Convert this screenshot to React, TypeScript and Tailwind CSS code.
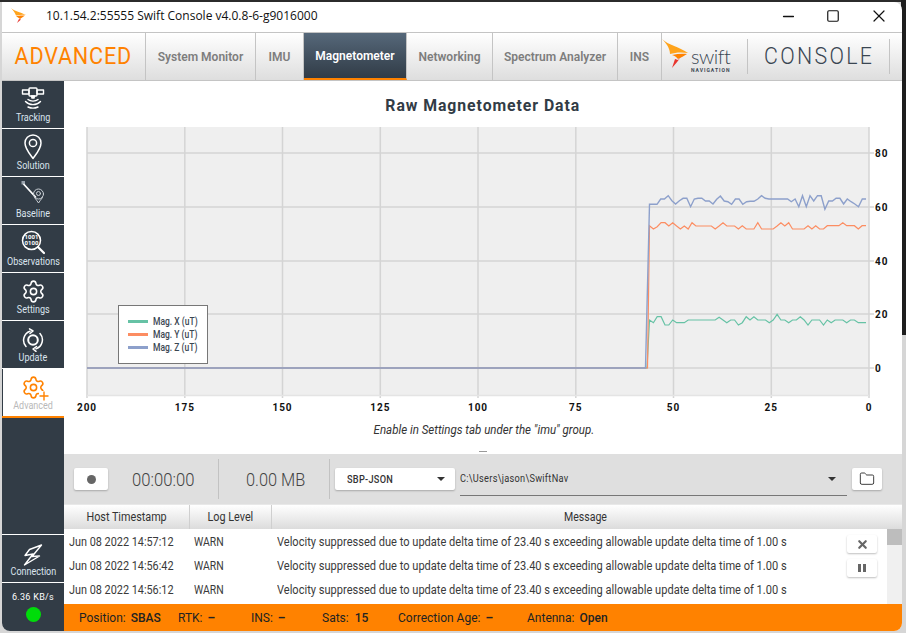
import { Folder, Minus, Settings, Square, X } from "lucide-react";
import type { ReactNode } from "react";

const blue = [73,73,73,57,57,47,62,72,62,55,55,80,57,55,55,63,63,72,58,48,63,65,73,57,57,73,65,64,64,57,47,55,57,57,57,57,57,57,65,57,80,47,80,47,63,47,47,88,63,63,55,55,72,57,65,72,80,57,57];
const orange = [137,147,140,128,128,138,128,138,147,138,147,128,138,138,138,138,138,147,138,128,138,138,138,147,137,147,147,147,128,147,147,147,147,138,128,138,128,147,147,147,147,137,147,137,147,147,137,137,137,137,128,137,137,137,147,137,137];
const green = [420,428,410,410,435,435,420,428,428,428,420,420,420,420,420,420,420,420,412,420,428,420,420,435,428,410,420,410,420,420,420,428,420,403,420,420,428,420,420,410,420,435,420,420,420,435,420,428,420,420,420,428,420,420,428,428,428];

function toPoints(values: number[], start: string) {
  const step = 216.5 / (values.length - 1);
  const pts = values.map((v, i) => `${(649.5 + i * step).toFixed(1)},${(180 + v / 3).toFixed(1)}`);
  return `87,368 ${start} ${pts.join(" ")}`;
}

const tabs = [
  { label: "System Monitor", w: "w-[110px]" },
  { label: "IMU", w: "w-[48px]" },
  { label: "Magnetometer", w: "w-[103px]", active: true },
  { label: "Networking", w: "w-[86px]" },
  { label: "Spectrum Analyzer", w: "w-[125px]" },
  { label: "INS", w: "w-[44px]" },
];

const logRows = ["Jun 08 2022 14:57:12", "Jun 08 2022 14:56:42", "Jun 08 2022 14:56:12"];

function NavItem({ label, icon }: { label: string; icon: ReactNode }) {
  return (
    <div className="flex h-[47px] flex-col items-center text-[10px] leading-none text-[#dbe4ee]">
      <div className="flex h-[31px] items-end justify-center">{icon}</div>
      <div className="mt-[1px] scale-x-90 whitespace-nowrap">{label}</div>
    </div>
  );
}

function Sep() {
  return <div className="h-px shrink-0 bg-white" />;
}

const iconProps = {
  fill: "none",
  stroke: "currentColor",
  strokeLinecap: "round" as const,
  strokeLinejoin: "round" as const,
};

function TrackingIcon() {
  return (
    <svg width="24" height="25" viewBox="0 0 24 25" {...iconProps} strokeWidth="1.4" className="text-white">
      <rect x="8" y="1" width="8" height="8" rx="1" />
      <rect x="1.5" y="3" width="6.5" height="4" />
      <rect x="16" y="3" width="6.5" height="4" />
      <path d="M10.5 9h3l-.5 2h-2z" fill="currentColor" />
      <path d="M7 12.5c2.5 2.2 7.5 2.2 10 0" />
      <path d="M4.5 14.5c4 4.2 11 4.2 15 0" />
      <path d="M7 20c3 1.4 7 1.4 10 0" />
    </svg>
  );
}

function PinIcon() {
  return (
    <svg width="20" height="27" viewBox="0 0 20 27" {...iconProps} strokeWidth="1.5" className="text-white">
      <path d="M10 25.5C6 20 2 15.5 2 10a8 8 0 0 1 16 0c0 5.5-4 10-8 15.5z" />
      <circle cx="10" cy="10" r="3.6" />
    </svg>
  );
}

function BaselineIcon() {
  return (
    <svg width="24" height="28" viewBox="0 0 24 28" {...iconProps} className="text-white">
      <rect x="0.5" y="1" width="3.5" height="3.5" fill="#9aa3ad" stroke="none" />
      <path d="M3 4.5 14.5 17" strokeWidth="1.8" />
      <circle cx="17.5" cy="14" r="5" strokeWidth="1" stroke="#c8ced4" />
      <circle cx="17.5" cy="13.5" r="2" strokeWidth="1" stroke="#c8ced4" />
      <path d="M13.5 17.5c1.5 2 2.8 3.6 4 5.5 1.2-1.9 2.5-3.5 4-5.5" strokeWidth="1" stroke="#c8ced4" />
    </svg>
  );
}

function ObservationsIcon() {
  return (
    <svg width="24" height="26" viewBox="0 0 24 26" {...iconProps} className="text-white">
      <circle cx="10.5" cy="10.5" r="9" strokeWidth="1.5" />
      <path d="M17 17l6 6" strokeWidth="2.2" />
      <text x="10.5" y="9" fontSize="6" fontWeight="700" textAnchor="middle" fill="currentColor" stroke="none" fontFamily="Roboto, sans-serif">1001</text>
      <text x="10.5" y="15" fontSize="6" fontWeight="700" textAnchor="middle" fill="currentColor" stroke="none" fontFamily="Roboto, sans-serif">0100</text>
    </svg>
  );
}

function UpdateIcon() {
  return (
    <svg width="22" height="24" viewBox="0 0 22 24" {...iconProps} strokeWidth="1.5" className="text-white">
      <path d="M18 5.5A9.5 9.5 0 0 1 14 20.8" />
      <path d="M4 18.5A9.5 9.5 0 0 1 8 3.2" />
      <path d="M7.5 0.8 11 3 8 5.5" />
      <path d="M14.5 18.5 11 21l3 2.4" />
      <circle cx="11" cy="12" r="4.8" strokeWidth="2" />
    </svg>
  );
}

function AdvancedIcon() {
  return (
    <div className="relative">
      <Settings size={25} strokeWidth={1.5} className="text-[#ff8200]" />
      <svg width="10" height="10" viewBox="0 0 10 10" className="absolute -right-[3px] bottom-[-1px] bg-white text-[#ff8200]" stroke="currentColor" strokeWidth="1.4">
        <path d="M5 0.5v9M0.5 5h9" />
      </svg>
    </div>
  );
}

function ConnectionIcon() {
  return (
    <svg width="20" height="22" viewBox="0 0 20 22" {...iconProps} strokeWidth="1.4" className="text-white">
      <path d="M18.5 1 6.5 5.5 2 11.5l8-1.5-8.5 11 15-9-7.5.5 5-6z" />
    </svg>
  );
}

function SwiftLogo() {
  return (
    <div className="flex h-full w-[85px] shrink-0 items-start">
      <svg width="28" height="30" viewBox="0 0 28 30" className="mt-[6px] shrink-0">
        <path d="M0 0c6 6 18 8 26 14-7-1-13-.5-18 1C8 9 4 4 0 0z" fill="#ffa41c" />
        <path d="M10 16c5-1 10-1.5 15-1-3 2-6 3.5-9 5-1-1.5-3-3-6-4z" fill="#ff8200" />
        <path d="M10 29l3-9 3 1 3-3c-3 4-6 7.5-9 11z" fill="#e8352e" />
      </svg>
      <div className="ml-[1px] mt-[12px] flex flex-col items-start">
        <div className="text-[20px] font-light leading-[22px] tracking-[-0.5px] text-[#3a4652]" style={{ fontFamily: "Lato, sans-serif" }}>swift</div>
        <div className="text-[5px] font-bold leading-[6px] tracking-[1px] text-[#3a4652]">NAVIGATION</div>
      </div>
    </div>
  );
}

function Chart() {
  const xLabels = ["200", "175", "150", "125", "100", "75", "50", "25", "0"];
  const xs = [87, 184.8, 282.5, 380.3, 478, 575.8, 673.5, 771.3, 869];
  const yLabels = [
    { y: 153, t: "80" },
    { y: 207, t: "60" },
    { y: 261, t: "40" },
    { y: 314, t: "20" },
    { y: 368, t: "0" },
  ];
  return (
    <svg width="838" height="300" viewBox="64 120 838 300" className="block">
      <rect x="87" y="127" width="782" height="269" fill="#efefef" />
      {xs.map((x) => (
        <line key={x} x1={x} x2={x} y1="127" y2="398" stroke="#d4d4d4" strokeWidth="1.5" />
      ))}
      {yLabels.map((l) => (
        <g key={l.t}>
          <line x1="87" x2="874" y1={l.y} y2={l.y} stroke="#d4d4d4" strokeWidth="1.5" />
          <text x="875" y={l.y + 3.5} fontSize="10" fontWeight="700" letterSpacing="1" fill="#111">{l.t}</text>
        </g>
      ))}
      <line x1="87" x2="869" y1="395.5" y2="395.5" stroke="#e4e4e4" strokeWidth="1.5" />
      {xs.map((x, i) => (
        <text key={x} x={x} y="410.5" textAnchor="middle" fontSize="10" fontWeight="700" letterSpacing="1" fill="#111">{xLabels[i]}</text>
      ))}
      <polyline points={toPoints(green, "647,368")} fill="none" stroke="#66c2a5" strokeWidth="1.2" />
      <polyline points={toPoints(orange, "647.5,368")} fill="none" stroke="#fc8d62" strokeWidth="1.2" />
      <polyline points={toPoints(blue, "645.5,368")} fill="none" stroke="#8da0cb" strokeWidth="1.4" />
    </svg>
  );
}

function Legend() {
  const items = [
    { c: "bg-[#66c2a5]", t: "Mag. X (uT)" },
    { c: "bg-[#fc8d62]", t: "Mag. Y (uT)" },
    { c: "bg-[#8da0cb]", t: "Mag. Z (uT)" },
  ];
  return (
    <div className="absolute left-[54px] top-[224px] flex h-[59px] w-[90px] flex-col justify-center gap-[1px] border border-[#777] bg-white pl-[9px]">
      {items.map((it) => (
        <div key={it.t} className="flex h-[12px] items-center gap-[5px] text-[10px] font-medium text-[#3a4652]">
          <div className={`h-[3px] w-[20px] ${it.c}`} />
          <span className="origin-left scale-x-[0.85] whitespace-nowrap">{it.t}</span>
        </div>
      ))}
    </div>
  );
}

function WhiteButton({ className, children }: { className: string; children: ReactNode }) {
  return (
    <div className={`flex items-center justify-center rounded-[2px] bg-white shadow-[0_1px_2px_rgba(0,0,0,0.25)] ${className}`}>
      {children}
    </div>
  );
}

function Caret() {
  return <div className="h-0 w-0 border-x-[4px] border-t-[4px] border-x-transparent border-t-[#333]" />;
}

export default function App() {
  return (
    <div className="relative h-[633px] w-[906px] overflow-hidden bg-[#d6d6d6] pl-[2px] pt-[2px]" style={{ fontFamily: "Roboto, sans-serif" }}>
      <div className="absolute left-0 top-0 h-[2px] w-full bg-[#2b2b2b]" />
      <div className="absolute right-0 top-0 h-[335px] w-[5px] bg-[#1e1e1e]" />
      <div className="relative flex h-[629px] w-[900px] flex-col overflow-hidden rounded-b-lg rounded-tr-lg bg-white">
        {/* title bar */}
        <div className="flex h-[30px] shrink-0 items-center pb-[2px]">
          <svg width="16" height="16" viewBox="0 0 16 16" className="ml-[9px]">
            <path d="M0 0c3 3 9 4 15 7-4-.5-7 0-10 .5C4 5 2 2 0 0z" fill="#ffa41c" />
            <path d="M5 8c3-.5 6-.5 9-.5L9 11z" fill="#ff8200" />
            <path d="M6 15l2-4 2 .5z" fill="#e8352e" />
          </svg>
          <div className="ml-[19px] text-[12px] text-[#111]" style={{ fontFamily: "'Open Sans', sans-serif" }}>10.1.54.2:55555 Swift Console v4.0.8-6-g9016000</div>
          <div className="ml-auto flex items-center text-[#111]">
            <Minus size={17} strokeWidth={1.8} className="mr-[29.5px]" />
            <Square size={14} strokeWidth={2} className="mr-[29px]" />
            <X size={20} strokeWidth={1.45} className="mr-[13px]" />
          </div>
        </div>

        {/* tab bar */}
        <div className="flex h-[49px] shrink-0 items-stretch border-y border-[#c4c4c4] bg-gradient-to-b from-white to-[#dedede]">
          <div className="flex w-[144px] shrink-0 items-center justify-center border-r border-[#c4c4c4] pb-[1px] text-[24px] tracking-[0.9px] text-[#ff8200]">
            <span className="scale-x-90">ADVANCED</span>
          </div>
          {tabs.map((t) => (
            <div
              key={t.label}
              className={`flex shrink-0 items-center justify-center border-r border-[#c4c4c4] text-[12px] font-semibold ${t.w} ${
                t.active
                  ? "border-b-2 border-b-[#ff8200] bg-gradient-to-b from-[#56687a] to-[#313c47] text-white"
                  : "text-[#7d7d7d]"
              }`}
            >
              {t.label}
            </div>
          ))}
          <SwiftLogo />
          <div className="my-[6px] w-px shrink-0 bg-[#c4c4c4]" />
          <div className="ml-[16px] flex w-[125px] shrink-0 items-center pb-[1px] text-[24px] font-light tracking-[2.6px] text-[#3a4652]">
            <span className="origin-left scale-x-[0.89]">CONSOLE</span>
          </div>
          <div className="my-[6px] w-px shrink-0 bg-[#c4c4c4]" />
        </div>

        <div className="flex min-h-0 flex-1">
          {/* sidebar */}
          <div className="flex w-[62px] shrink-0 flex-col bg-[#323c46]">
            <NavItem label="Tracking" icon={<TrackingIcon />} />
            <Sep />
            <NavItem label="Solution" icon={<PinIcon />} />
            <Sep />
            <NavItem label="Baseline" icon={<BaselineIcon />} />
            <Sep />
            <NavItem label="Observations" icon={<ObservationsIcon />} />
            <Sep />
            <NavItem label="Settings" icon={<Settings size={25} strokeWidth={1.5} className="text-white" />} />
            <Sep />
            <NavItem label="Update" icon={<UpdateIcon />} />
            <Sep />
            <div className="ml-px flex h-[47px] flex-col items-center bg-white text-[10px] leading-none text-[#b9b9b9]">
              <div className="flex h-[31px] items-end justify-center"><AdvancedIcon /></div>
              <div className="mt-[1px] scale-x-90">Advanced</div>
            </div>
            <div className="h-[2px] shrink-0 bg-[#ff8200]" />
            <div className="flex-1" />
            <Sep />
            <NavItem label="Connection" icon={<ConnectionIcon />} />
            <Sep />
            <div className="flex h-[48px] flex-col items-center pt-[9px] text-[9px] leading-[11px] tracking-[0.3px] text-white">
              <div>6.36 KB/s</div>
              <div className="mt-[4px] h-[15px] w-[15px] rounded-full bg-[#00dc0a]" />
            </div>
          </div>

          {/* main */}
          <div className="flex min-w-0 flex-1 flex-col">
            <div className="relative flex h-[373px] shrink-0 flex-col">
              <div className="flex h-[39px] shrink-0 items-center justify-center pt-[10px] text-[17px] font-bold tracking-[1px] text-[#323c46]">
                <span className="scale-x-[0.93]">Raw Magnetometer Data</span>
              </div>
              <Chart />
              <Legend />
              <div className="mt-[2px] pl-[1px] text-center text-[12px] italic leading-[16px] text-[#333]">
                <span className="inline-block scale-x-[0.96]">Enable in Settings tab under the "imu" group.</span>
              </div>
              <div className="absolute bottom-[2px] left-[415px] h-px w-[8px] bg-[#999]" />
            </div>

            {/* recording bar */}
            <div className="flex h-[50px] shrink-0 items-center bg-[#dfdfdf]">
              <WhiteButton className="ml-[10px] h-[22px] w-[34px]">
                <div className="h-[9px] w-[9px] rounded-full bg-[#666]" />
              </WhiteButton>
              <div className="w-[110px] shrink-0 pl-[24px] text-[18px] font-light text-[#444]">
                <span className="inline-block origin-left scale-x-[0.925]">00:00:00</span>
              </div>
              <div className="h-[40px] w-px shrink-0 bg-[#c2c2c2]" />
              <div className="flex w-[110px] shrink-0 justify-center pl-[3px] text-[18px] font-light text-[#444]">
                <span className="scale-x-[0.91]">0.00 MB</span>
              </div>
              <div className="h-[40px] w-px shrink-0 bg-[#c2c2c2]" />
              <WhiteButton className="ml-[5px] h-[22px] w-[120px] !justify-between pl-[12px] pr-[10px] text-[10px] font-medium tracking-[0.3px] text-[#333]">
                <span className="origin-left scale-x-[0.92]">SBP-JSON</span>
                <Caret />
              </WhiteButton>
              <div className="ml-[5px] flex h-[33px] w-[387px] shrink-0 items-center justify-between self-center border-b border-[#777] pr-[11px] text-[10px] tracking-[0.3px] text-[#333]">
                <span className="origin-left scale-x-[0.92]">C:\Users\jason\SwiftNav</span>
                <Caret />
              </div>
              <WhiteButton className="ml-[5px] h-[22px] w-[30px]">
                <Folder size={16} strokeWidth={1.3} className="text-[#222]" />
              </WhiteButton>
            </div>

            {/* log table */}
            <div className="flex h-[25px] shrink-0 items-center border-t border-[#e8e8e8] bg-gradient-to-b from-white to-[#dcdcdc] text-[12px] text-[#333]">
              <div className="flex h-full w-[126px] shrink-0 items-center justify-center border-r border-[#cfcfcf] pl-[1px]"><span className="scale-x-90">Host Timestamp</span></div>
              <div className="flex h-full w-[82px] shrink-0 items-center justify-center border-r border-[#cfcfcf]"><span className="scale-x-90">Log Level</span></div>
              <div className="flex h-full flex-1 items-center justify-center pr-[3px]"><span className="scale-x-[0.88]">Message</span></div>
            </div>
            <div className="flex min-h-0 flex-1">
              <div className="flex min-w-0 flex-1 flex-col pt-[1px] text-[12px] text-[#3a3a3a]">
                {logRows.map((ts) => (
                  <div key={ts} className="flex h-[24px] shrink-0 items-center whitespace-nowrap">
                    <div className="w-[125px] shrink-0 pl-[5px]"><span className="inline-block origin-left scale-x-[0.905]">{ts}</span></div>
                    <div className="w-[83px] shrink-0 pl-[5px]"><span className="inline-block origin-left scale-x-[0.87]">WARN</span></div>
                    <div className="pl-[5px]"><span className="inline-block origin-left scale-x-[0.922]">Velocity suppressed due to update delta time of 23.40 s exceeding allowable update delta time of 1.00 s</span></div>
                  </div>
                ))}
              </div>
              <div className="flex w-[40px] shrink-0 flex-col items-center gap-[6px] pr-[10px] pt-[6px]">
                <WhiteButton className="h-[18px] w-[30px]"><X size={13} strokeWidth={4} className="text-[#666]" /></WhiteButton>
                <WhiteButton className="h-[18px] w-[30px] gap-[2px]">
                  <div className="h-[8px] w-[3px] bg-[#666]" />
                  <div className="h-[8px] w-[3px] bg-[#666]" />
                </WhiteButton>
              </div>
              <div className="w-[15px] shrink-0 bg-[#f0f0f0]">
                <div className="h-[16px] bg-[#bdbdbd]" />
              </div>
            </div>

            {/* status bar */}
            <div className="flex h-[27px] shrink-0 items-center bg-[#ff8200] pl-[15px] text-[12px] text-[#222]">
              <div className="flex w-[99px] shrink-0 gap-[5px]"><span>Position:</span><span className="font-medium">SBAS</span></div>
              <div className="flex w-[73px] shrink-0 gap-[5px]"><span>RTK:</span><span className="font-bold">–</span></div>
              <div className="flex w-[71px] shrink-0 gap-[5px]"><span>INS:</span><span className="font-bold">–</span></div>
              <div className="flex w-[76px] shrink-0 gap-[6px]"><span>Sats:</span><span className="font-medium">15</span></div>
              <div className="flex w-[129px] shrink-0 gap-[5px]"><span>Correction Age:</span><span className="font-bold">–</span></div>
              <div className="flex shrink-0 gap-[5px]"><span>Antenna:</span><span className="font-medium">Open</span></div>
            </div>
          </div>
        </div>
      </div>
    </div>
  );
}
